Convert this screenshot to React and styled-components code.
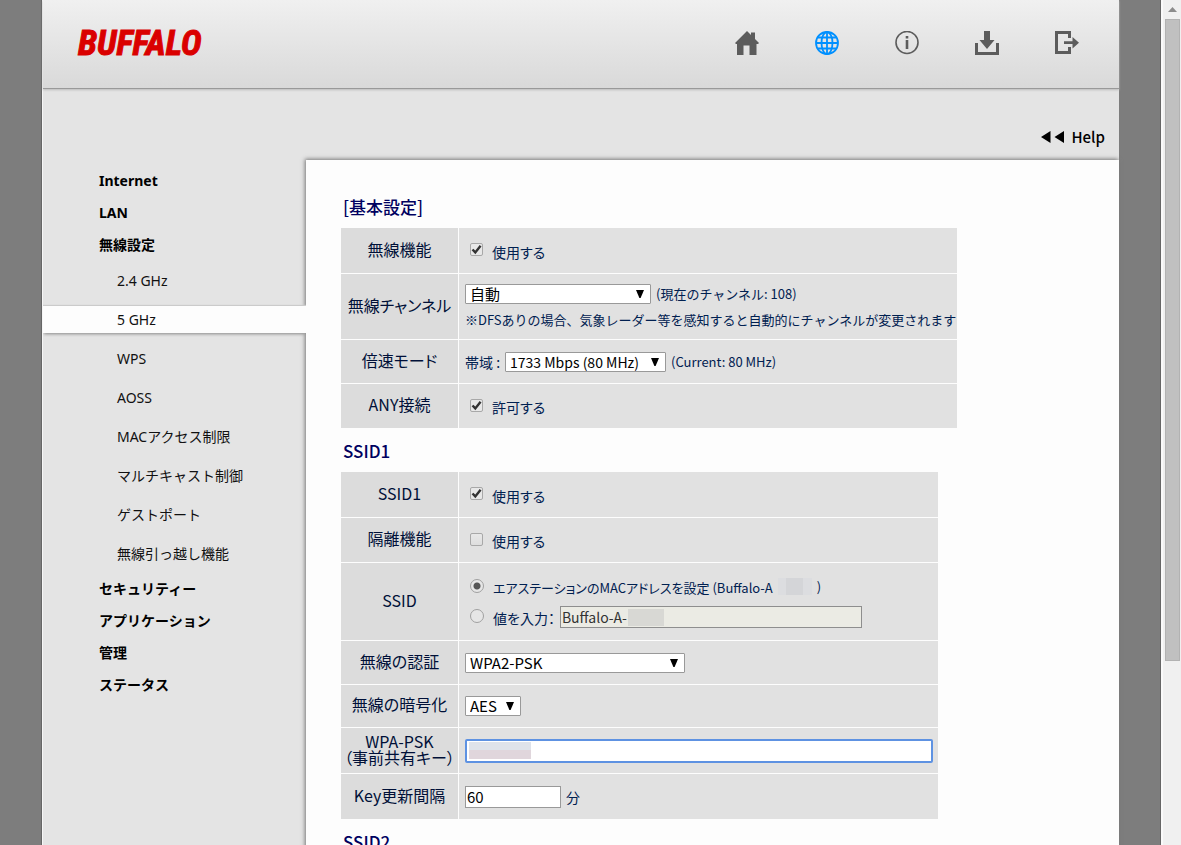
import { useState } from "react";
import styled, { createGlobalStyle, css } from "styled-components";

const GlobalStyle = createGlobalStyle`
  * {
    box-sizing: border-box;
  }
  body {
    margin: 0;
    background: #7d7d7d;
    font-family: "Noto Sans CJK JP", sans-serif;
    font-feature-settings: "palt";
  }
`;

const arrow = `url("data:image/svg+xml,%3Csvg xmlns='http://www.w3.org/2000/svg' width='8' height='8'%3E%3Cpath d='M0 0h8L4.6 8H3.4z'/%3E%3C/svg%3E")`;
const tick = `url("data:image/svg+xml,%3Csvg xmlns='http://www.w3.org/2000/svg' width='11' height='11'%3E%3Cpath d='M1.5 5.5L4.3 8.4L9.6 1.8' fill='none' stroke='%23333' stroke-width='2.4'/%3E%3C/svg%3E")`;

const Window = styled.div`
  display: flex;
  height: 100vh;
`;

const Viewport = styled.div`
  flex: 1;
  min-width: 0;
  padding: 0 42px;
  overflow-y: auto;
  scrollbar-width: none;
`;

const Page = styled.div`
  display: flex;
  flex-direction: column;
  min-height: 100%;
  background: #e4e4e4;
  border-left: 1px solid #f6f6f6;
  box-shadow: -1px 0 #666;
`;

const ScrollBar = styled.div`
  display: flex;
  flex-direction: column;
  align-items: center;
  width: 20px;
  background: #f0f0f0;
  border-left: 2px solid #fafafa;
  box-shadow: -1px 0 #666;
`;

const ScrollArrow = styled.div`
  display: flex;
  align-items: center;
  height: 19px;
`;

const Thumb = styled.div`
  width: 15px;
  height: 76%;
  background: #c0c0c0;
  border: 1px solid #b2b2b2;
`;

const Header = styled.header`
  display: flex;
  align-items: center;
  justify-content: space-between;
  height: 89px;
  padding: 0 40px 2px 35px;
  background: linear-gradient(#f0f0f0, #d9d9d9);
  border-bottom: 1px solid #999;
  box-shadow: 0 1px 2px #bbb;
`;

const Logo = styled.h1`
  margin: 0;
  color: #da0000;
  font: italic bold 35px "Liberation Sans Narrow", "Roboto Condensed", "DejaVu Sans Condensed", sans-serif;
  -webkit-text-stroke: 1px currentColor;
`;

const IconNav = styled.nav`
  display: flex;
  gap: 56px;
`;

const IconLink = styled.a`
  display: flex;
  color: ${(props) => (props.$active ? "#0090ff" : "#5c5c5c")};
`;

const HelpBar = styled.div`
  display: flex;
  justify-content: flex-end;
  align-items: center;
  height: 71px;
  padding: 24px 14px 0;
`;

const HelpLink = styled.a`
  display: flex;
  align-items: center;
  gap: 6px;
  color: #000;
  font-size: 15px;
  font-weight: 500;
  line-height: 20px;
  text-decoration: none;
`;

const Columns = styled.div`
  display: flex;
  flex: 1;
`;

const Sidebar = styled.nav`
  flex: 0 0 263px;
  padding-top: 5px;
  font-family: "Noto Sans", "Noto Sans CJK JP", sans-serif;
  font-feature-settings: normal;
  font-size: 14px;
`;

const MenuLink = styled.a`
  display: block;
  padding-left: 56px;
  color: #000;
  font-weight: 700;
  line-height: 32px;
  text-decoration: none;
`;

const SubLink = styled.a`
  display: block;
  margin: 6px 0;
  padding: 6px 0 6px 74px;
  color: #111;
  line-height: 15px;
  text-decoration: none;
  ${(props) =>
    props.$active &&
    css`
      position: relative;
      z-index: 1;
      background: #fdfdfd;
      box-shadow: 0 2px 3px -1px #888, 0 -1px 1px #ccc;
      clip-path: inset(-4px 0);
    `}
`;

const SubMenu = styled.div`
  display: flow-root;

  ${SubLink} + ${SubLink} {
    margin-top: 12px;
  }
`;

const Panel = styled.main`
  flex: 1;
  min-width: 0;
  padding: 33px 34px 40px;
  background: #fdfdfd;
  box-shadow: -1px -1px 4px #777;
`;

const Heading = styled.h2`
  margin: 0 0 6px 3px;
  color: #000060;
  font-size: 17px;
  font-weight: 500;
  line-height: 28px;
`;

const Table = styled.table`
  width: ${(props) => props.$width}px;
  max-width: 100%;
  margin-bottom: 8px;
  border-spacing: 1px;
  table-layout: fixed;
`;

const Th = styled.th`
  width: 117px;
  padding: 0 0 4px;
  background: #dcdcdc;
  color: #001038;
  font-size: 16px;
  font-weight: 400;
  line-height: 16px;
  white-space: nowrap;
`;

const Td = styled.td`
  height: ${(props) => props.$height || 44}px;
  padding: 0 5px 0 6px;
  background: #e1e1e1;
  color: #002050;
  font-size: 14px;
  line-height: 20px;
`;

const Line = styled.div`
  display: flex;
  align-items: center;
  gap: 5px;
  min-height: ${(props) => props.$height || 20}px;
  white-space: nowrap;
`;

const Note = styled.span`
  font-feature-settings: normal;
  font-size: 13px;
`;

const Choice = styled.label`
  display: flex;
  align-items: center;
  gap: 9px;
  margin-bottom: 2px;
  padding-left: 5px;
`;

const ChoiceText = styled.span`
  padding-top: 4px;
  font-size: ${(props) => (props.$small ? 13 : 14)}px;
`;

const Tick = styled.input`
  appearance: none;
  width: 13px;
  height: 13px;
  margin: 0;
  background: linear-gradient(#e8e8e8, #dedede);
  border: 1px solid #a8a8a8;
  border-radius: 2px;
  &:checked {
    background: ${tick} center no-repeat, #e8e8e8;
  }
`;

const Radio = styled.input`
  appearance: none;
  width: 14px;
  height: 14px;
  margin: 0;
  background: #e6e6e6;
  border: 1px solid #a0a0a0;
  border-radius: 50%;
  &:checked {
    background: radial-gradient(circle, #555 3px, #e6e6e6 4px);
  }
`;

const Select = styled.select`
  appearance: none;
  width: ${(props) => props.$width}px;
  height: 20px;
  padding: 0 0 0 4px;
  background: ${arrow} right 6px top 5px no-repeat, #fff;
  border: 1px solid #999;
  border-radius: 1px;
  color: #000;
  font: inherit;
  font-feature-settings: inherit;
  font-size: ${(props) => (props.$small ? 14 : 15)}px;
  line-height: 18px;
`;

const Input = styled.input`
  width: ${(props) => props.$width};
  height: 22px;
  padding: 0 1px;
  background: #fff;
  border: 1px solid #999;
  color: #000;
  font: inherit;
  font-size: 15px;
  &:disabled {
    background: #ebebe4;
    border-color: #8e8e8e;
    color: #333;
    font-size: 14px;
  }
`;

const KeyInput = styled(Input)`
  height: 24px;
  border: 2px solid #5e92e2;
  border-radius: 2px;
  outline: none;
`;

const Field = styled.div`
  position: relative;
  display: flex;
  ${(props) => props.$grow && "flex: 1;"}
`;

const Mosaic = styled.span`
  width: ${(props) => props.$width}px;
  height: 17px;
  background: ${(props) => props.$fill};
`;

const FieldMosaic = styled(Mosaic)`
  position: absolute;
  top: 3px;
  left: ${(props) => props.$left}px;
`;

const HomeIcon = () => (
  <svg width="24" height="24" viewBox="0 0 24 24" fill="currentColor">
    <path d="M12 0L16 4V1.500H20V8L24 12L23 13H21.500V24H14.500V14.500H8.500V24H2V13H1L0 12Z" />
  </svg>
);

const GlobeIcon = () => (
  <svg width="24" height="24" viewBox="0 0 24 24" fill="none" stroke="currentColor" strokeWidth="1.800">
    <circle cx="12" cy="12" r="11" />
    <ellipse cx="12" cy="12" rx="5.500" ry="11" />
    <path d="M12 1V23M1 12H23M3 6.500H21M3 17.500H21" />
  </svg>
);

const InfoIcon = () => (
  <svg width="24" height="24" viewBox="0 0 24 24" fill="none" stroke="currentColor">
    <circle cx="12" cy="11.500" r="11" strokeWidth="1.600" />
    <path d="M12 5V7.500M12 9V18" strokeWidth="2.600" />
  </svg>
);

const DownloadIcon = () => (
  <svg width="24" height="24" viewBox="0 0 24 24" fill="currentColor">
    <path d="M9 0H15V9H19.500L12 18L4.500 9H9Z" />
    <path d="M0 12H3V21H21V12H24V24H0Z" />
  </svg>
);

const LogoutIcon = () => (
  <svg width="24" height="24" viewBox="0 0 24 24" fill="currentColor">
    <path d="M0 0H16V7H13V3H3V20H13V16H16V23H0Z" />
    <path d="M9 10.300H17.500V6L24 11.700L17.500 17.500V13H9Z" />
  </svg>
);

const topIcons = [
  { label: "Home", Icon: HomeIcon },
  { label: "Internet", Icon: GlobeIcon, active: true },
  { label: "Info", Icon: InfoIcon },
  { label: "Download", Icon: DownloadIcon },
  { label: "Logout", Icon: LogoutIcon },
];

const menu = [
  { title: "Internet" },
  { title: "LAN" },
  {
    title: "無線設定",
    items: [
      "2.4 GHz",
      "5 GHz",
      "WPS",
      "AOSS",
      "MACアクセス制限",
      "マルチキャスト制御",
      "ゲストポート",
      "無線引っ越し機能",
    ],
  },
  { title: "セキュリティー" },
  { title: "アプリケーション" },
  { title: "管理" },
  { title: "ステータス" },
];

const Row = ({ label, height, htmlFor, children }) => (
  <tr>
    <Th scope="row">{htmlFor ? <label htmlFor={htmlFor}>{label}</label> : label}</Th>
    <Td $height={height}>{children}</Td>
  </tr>
);

const CheckRow = ({ label, text, height, checked }) => {
  const [on, setOn] = useState(checked);
  return (
    <Row label={label} height={height}>
      <Choice>
        <Tick type="checkbox" checked={on} onChange={(e) => setOn(e.target.checked)} />
        <ChoiceText>{text}</ChoiceText>
      </Choice>
    </Row>
  );
};

const BasicSettings = () => (
  <Table $width={618}>
    <tbody>
      <CheckRow label="無線機能" text="使用する" height={45} checked />
      <Row label="無線チャンネル" height={65} htmlFor="channel">
        <Line $height={26}>
          <Select id="channel" $width={186}>
            <option>自動</option>
          </Select>
          <Note>(現在のチャンネル: 108)</Note>
        </Line>
        <Line $height={26}>
          <Note>※DFSありの場合、気象レーダー等を感知すると自動的にチャンネルが変更されます</Note>
        </Line>
      </Row>
      <Row label="倍速モード" height={43}>
        <Line>
          <label htmlFor="band">帯域 :</label>
          <Select id="band" $width={161} $small>
            <option>1733 Mbps (80 MHz)</option>
          </Select>
          <Note>(Current: 80 MHz)</Note>
        </Line>
      </Row>
      <CheckRow label="ANY接続" text="許可する" height={44} checked />
    </tbody>
  </Table>
);

const SsidSettings = () => {
  const [source, setSource] = useState("mac");
  return (
    <Table $width={599}>
      <tbody>
        <CheckRow label="SSID1" text="使用する" height={45} checked />
        <CheckRow label="隔離機能" text="使用する" height={44} checked={false} />
        <Row label="SSID" height={77}>
          <Line $height={30}>
            <Choice>
              <Radio type="radio" name="ssid" checked={source === "mac"} onChange={() => setSource("mac")} />
              <ChoiceText $small>エアステーションのMACアドレスを設定 (Buffalo-A</ChoiceText>
            </Choice>
            <Mosaic $width={34} $fill="linear-gradient(90deg, #dcdde0 25%, #d4d5d8 25% 75%, #dcdde0 75%)" />
            <Note>)</Note>
          </Line>
          <Line $height={30}>
            <Choice>
              <Radio type="radio" name="ssid" checked={source === "manual"} onChange={() => setSource("manual")} />
              <ChoiceText>値を入力：</ChoiceText>
            </Choice>
            <Field>
              <Input aria-label="SSID" $width="302px" defaultValue="Buffalo-A-" disabled={source === "mac"} />
              <FieldMosaic $left={68} $width={36} $fill="#d8d8d4" />
            </Field>
          </Line>
        </Row>
        <Row label="無線の認証" height={43} htmlFor="auth">
          <Line>
            <Select id="auth" $width={220}>
              <option>WPA2-PSK</option>
            </Select>
          </Line>
        </Row>
        <Row label="無線の暗号化" height={42} htmlFor="cipher">
          <Line>
            <Select id="cipher" $width={56}>
              <option>AES</option>
            </Select>
          </Line>
        </Row>
        <Row
          label={
            <>
              WPA-PSK
              <br />
              （事前共有キー）
            </>
          }
          height={45}
          htmlFor="psk"
        >
          <Field $grow>
            <KeyInput id="psk" $width="100%" />
            <FieldMosaic $left={4} $width={62} $fill="linear-gradient(#dfe3ea 50%, #e0d6dc 50%)" />
          </Field>
        </Row>
        <Row label="Key更新間隔" height={45} htmlFor="rekey">
          <Line>
            <Input id="rekey" $width="96px" defaultValue="60" />
            <span>分</span>
          </Line>
        </Row>
      </tbody>
    </Table>
  );
};

const App = () => {
  return (
    <Window>
      <GlobalStyle />
      <Viewport>
        <Page>
          <Header>
            <Logo>BUFFALO</Logo>
            <IconNav>
              {topIcons.map(({ label, Icon, active }) => (
                <IconLink key={label} href="#" aria-label={label} $active={active}>
                  <Icon />
                </IconLink>
              ))}
            </IconNav>
          </Header>
          <HelpBar>
            <HelpLink href="#">
              <svg width="24" height="12" viewBox="0 0 24 12">
                <path d="M9.500 0V12L0 6ZM23 0V12L13.500 6Z" />
              </svg>
              Help
            </HelpLink>
          </HelpBar>
          <Columns>
            <Sidebar>
              {menu.map(({ title, items }) => (
                <div key={title}>
                  <MenuLink href="#">{title}</MenuLink>
                  {items && (
                    <SubMenu>
                      {items.map((item) => (
                        <SubLink key={item} href="#" $active={item === "5 GHz"}>
                          {item}
                        </SubLink>
                      ))}
                    </SubMenu>
                  )}
                </div>
              ))}
            </Sidebar>
            <Panel>
              <Heading>[基本設定]</Heading>
              <BasicSettings />
              <Heading>SSID1</Heading>
              <SsidSettings />
              <Heading>SSID2</Heading>
            </Panel>
          </Columns>
        </Page>
      </Viewport>
      <ScrollBar>
        <ScrollArrow>
          <svg width="9" height="5" viewBox="0 0 9 5" fill="#8c8c8c">
            <path d="M4.500 0L9 5H0Z" />
          </svg>
        </ScrollArrow>
        <Thumb />
      </ScrollBar>
    </Window>
  );
};

export default App;
